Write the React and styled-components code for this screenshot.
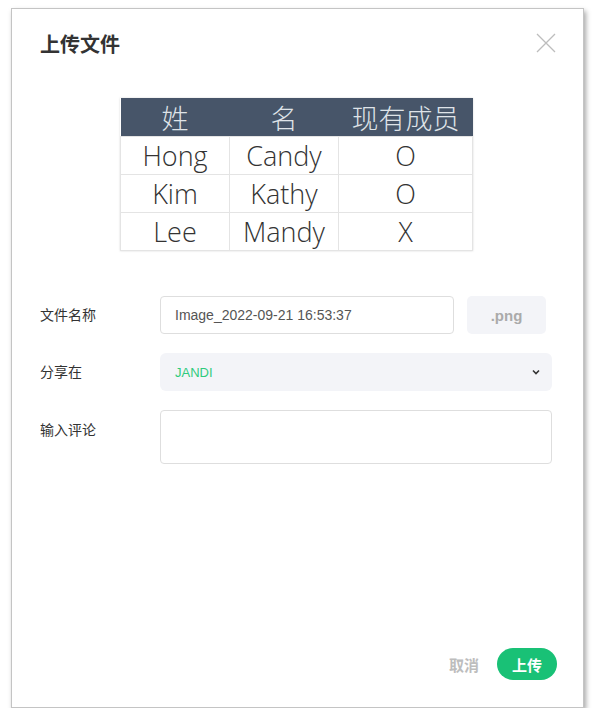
import styled, { createGlobalStyle } from "styled-components"

const Global = createGlobalStyle`
  html, body {
    margin: 0;
    padding: 0;
    background: #ffffff;
    font-family: "Noto Sans", "Noto Sans CJK SC", sans-serif;
  }
`

const Page = styled.div`
  padding: 8px 0 0 11px;
`

const Dialog = styled.div`
  box-sizing: border-box;
  width: 573px;
  height: 700px;
  background: #fff;
  border: 1px solid #c4c4c4;
  box-shadow: 2px 3px 5px rgba(0, 0, 0, 0.35);
  display: flex;
  flex-direction: column;
  padding: 20px 26px 27px 28px;
`

const Header = styled.div`
  display: flex;
  justify-content: space-between;
  align-items: center;
  height: 28px;
`

const Title = styled.h2`
  margin: 0;
  font-size: 20px;
  font-weight: 700;
  color: #333;
  font-family: "Noto Sans CJK SC", sans-serif;
`

const Close = styled.button`
  border: 0;
  background: none;
  padding: 0;
  width: 22px;
  height: 22px;
  cursor: pointer;
  display: flex;
  align-items: center;
  justify-content: center;
`

const Preview = styled.div`
  display: flex;
  justify-content: center;
  margin: 41px 0 0 -4px;
`

const Table = styled.table`
  border-collapse: collapse;
  font-family: "Open Sans", "Noto Sans CJK SC", sans-serif;
  font-weight: 350;
  font-size: 27px;
  line-height: 1;
  box-shadow: 0 0 2px rgba(0, 0, 0, 0.15);
`

const Th = styled.th`
  background: #475569;
  color: #dfe3e8;
  font-weight: 300;
  height: 38px;
  padding: 0;
  width: ${({ $w }) => $w}px;
  font-family: "Noto Sans CJK SC", sans-serif;
`

const Td = styled.td`
  height: 37px;
  padding: 0;
  text-align: center;
  color: #333;
  border: 1px solid #e4e4e4;
`

const Form = styled.div`
  margin-top: 45px;
  display: flex;
  flex-direction: column;
  gap: 19px;
`

const Row = styled.div`
  display: flex;
  align-items: ${({ $top }) => ($top ? "flex-start" : "center")};
`

const Label = styled.div`
  width: 120px;
  font-size: 14px;
  color: #333;
  font-family: "Noto Sans CJK SC", sans-serif;
  padding-top: ${({ $top }) => ($top ? "11px" : "0")};
  margin-top: -2px;
`

const Input = styled.div`
  box-sizing: border-box;
  width: ${({ $w }) => $w}px;
  height: ${({ $h }) => $h || 38}px;
  border: 1px solid #dedede;
  border-radius: 4px;
  padding: 0 14px;
  display: flex;
  align-items: center;
  font-family: "Liberation Sans", Arial, sans-serif;
  font-size: 14px;
  color: #555;
`

const Ext = styled.div`
  box-sizing: border-box;
  width: 79px;
  height: 38px;
  margin-left: 13px;
  border-radius: 5px;
  background: #f3f4f8;
  display: flex;
  align-items: center;
  justify-content: center;
  font-family: "Liberation Sans", Arial, sans-serif;
  font-weight: 700;
  font-size: 15px;
  color: #aaa;
`

const Select = styled.div`
  box-sizing: border-box;
  width: 392px;
  height: 38px;
  border-radius: 6px;
  background: #f3f4f8;
  display: flex;
  align-items: center;
  justify-content: space-between;
  padding: 0 10px 0 15px;
  font-family: "Liberation Sans", Arial, sans-serif;
  font-size: 13px;
  color: #2fcb7c;
`

const Footer = styled.div`
  margin-top: auto;
  display: flex;
  justify-content: flex-end;
  align-items: center;
  gap: 18px;
`

const Button = styled.button`
  border: 0;
  font-family: "Noto Sans CJK SC", sans-serif;
  font-weight: 700;
  font-size: 15px;
  cursor: pointer;
  background: ${({ $primary }) => ($primary ? "#19c176" : "transparent")};
  color: ${({ $primary }) => ($primary ? "#fff" : "#bdbdbd")};
  height: 32px;
  padding: ${({ $primary }) => ($primary ? "0 15px" : "0")};
  border-radius: 16px;
`

const rows = [
  ["Hong", "Candy", "O"],
  ["Kim", "Kathy", "O"],
  ["Lee", "Mandy", "X"],
]

export default function App() {
  return (
    <Page>
      <Global />
      <Dialog>
        <Header>
          <Title>上传文件</Title>
          <Close>
            <svg width="20" height="20" viewBox="0 0 20 20">
              <path d="M1 1L19 19M19 1L1 19" stroke="#bdbdbd" strokeWidth="1.3" fill="none" />
            </svg>
          </Close>
        </Header>
        <Preview>
          <Table>
            <thead>
              <tr>
                <Th $w={109}>姓</Th>
                <Th $w={109}>名</Th>
                <Th $w={134}>现有成员</Th>
              </tr>
            </thead>
            <tbody>
              {rows.map((r) => (
                <tr key={r[0]}>
                  {r.map((c, i) => (
                    <Td key={i}>{c}</Td>
                  ))}
                </tr>
              ))}
            </tbody>
          </Table>
        </Preview>
        <Form>
          <Row>
            <Label>文件名称</Label>
            <Input $w={294}>Image_2022-09-21 16:53:37</Input>
            <Ext>.png</Ext>
          </Row>
          <Row>
            <Label>分享在</Label>
            <Select>
              JANDI
              <svg width="12" height="12" viewBox="0 0 12 12">
                <path d="M3 4.5L6 7.5L9 4.5" stroke="#333" strokeWidth="1.6" fill="none" />
              </svg>
            </Select>
          </Row>
          <Row $top>
            <Label $top>输入评论</Label>
            <Input $w={392} $h={54} />
          </Row>
        </Form>
        <Footer>
          <Button>取消</Button>
          <Button $primary>上传</Button>
        </Footer>
      </Dialog>
    </Page>
  )
}
